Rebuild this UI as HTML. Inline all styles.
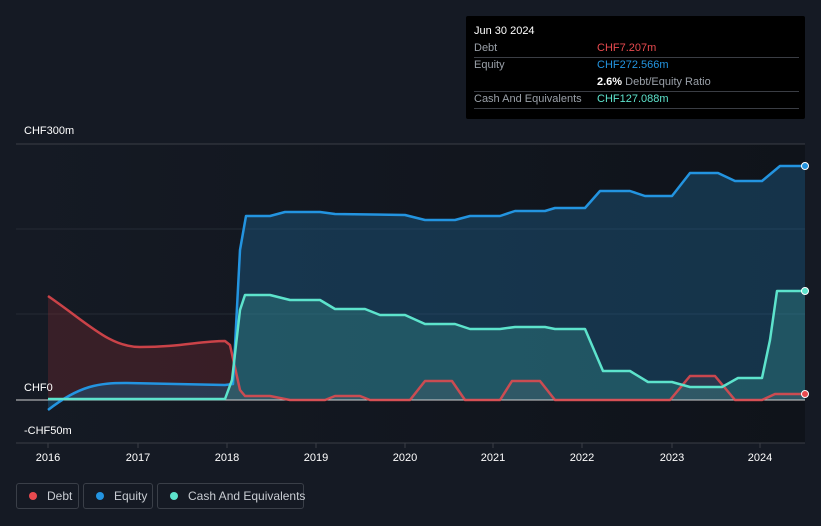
<!DOCTYPE html>
<html><head><meta charset="utf-8"><style>
body{margin:0;width:821px;height:526px;background:#151a24;font-family:"Liberation Sans",sans-serif;overflow:hidden;position:relative}
.tip{position:absolute;left:466px;top:16px;width:339px;height:103px;background:#000;border-radius:2px;font-size:11px}
.tip .r{position:absolute;left:8px;right:6px;border-bottom:1px solid #3a3d44;height:17px}
.lbl{position:absolute;color:#fff;font-size:11px}
.leg{position:absolute;top:483px;height:26px;border:1px solid #3a3f48;border-radius:3px;color:#c8ccd2;font-size:12px;box-sizing:border-box;line-height:24px;white-space:nowrap}
.leg i{display:inline-block;width:8px;height:8px;border-radius:50%;margin:0 10px 0 12px;vertical-align:0}
</style></head><body>
<svg width="821" height="526" style="position:absolute;left:0;top:0">
<defs><linearGradient id="bg" x1="0" x2="1"><stop offset="0" stop-color="#151a24"/><stop offset="1" stop-color="#0f131a"/></linearGradient></defs>
<rect x="16" y="144" width="789" height="299" fill="url(#bg)"/>
<line x1="16" y1="144" x2="805" y2="144" stroke="#3a3e46"/>
<line x1="16" y1="229" x2="805" y2="229" stroke="#252b35"/>
<line x1="16" y1="314" x2="805" y2="314" stroke="#252b35"/>
<line x1="16" y1="443" x2="805" y2="443" stroke="#3a3e46"/>
<path d="M48,296 C90,325 110,347 140,347 C180,347 200,341 225,341 L230,345 L240,390 L245,396 L270,396 L290,400 L325,400 L335,396 L360,396 L370,400 L410,400 L425,381 L452,381 L465,400 L500,400 L512,381 L540,381 L555,400 L670,400 L690,376 L715,376 L735,400 L762,400 L775,394 L805,394 L805,400 L48,400Z" fill="#7a2a30" fill-opacity="0.35"/>
<path d="M48,410 C80,385 100,383 125,383 L225,385 L233,384 L240,250 L246,216 L270,216 L285,212 L320,212 L335,214 L405,215 L425,220 L455,220 L470,216 L500,216 L515,211 L545,211 L555,208 L585,208 L600,191 L630,191 L645,196 L672,196 L690,173 L718,173 L735,181 L762,181 L780,166 L805,166 L805,400 L48,400Z" fill="#1d5a86" fill-opacity="0.45"/>
<path d="M48,399 L225,399 L232,380 L240,310 L245,295 L270,295 L290,300 L320,300 L335,309 L365,309 L380,315 L405,315 L425,324 L455,324 L470,329 L500,329 L515,327 L545,327 L555,329 L585,329 L603,371 L630,371 L648,382 L672,382 L690,387 L722,387 L738,378 L762,378 L770,340 L777,291 L805,291 L805,400 L48,400Z" fill="#3aa39a" fill-opacity="0.3"/>
<line x1="16" y1="400" x2="805" y2="400" stroke="#d0d0d0" stroke-width="1"/>
<path d="M48,296 C90,325 110,347 140,347 C180,347 200,341 225,341 L230,345 L240,390 L245,396 L270,396 L290,400 L325,400 L335,396 L360,396 L370,400 L410,400 L425,381 L452,381 L465,400 L500,400 L512,381 L540,381 L555,400 L670,400 L690,376 L715,376 L735,400 L762,400 L775,394 L805,394" fill="none" stroke="#e84a4f" stroke-width="2.5" stroke-linejoin="round" opacity="0.85"/>
<path d="M48,410 C80,385 100,383 125,383 L225,385 L233,384 L240,250 L246,216 L270,216 L285,212 L320,212 L335,214 L405,215 L425,220 L455,220 L470,216 L500,216 L515,211 L545,211 L555,208 L585,208 L600,191 L630,191 L645,196 L672,196 L690,173 L718,173 L735,181 L762,181 L780,166 L805,166" fill="none" stroke="#2394e0" stroke-width="2.5" stroke-linejoin="round"/>
<path d="M48,399 L225,399 L232,380 L240,310 L245,295 L270,295 L290,300 L320,300 L335,309 L365,309 L380,315 L405,315 L425,324 L455,324 L470,329 L500,329 L515,327 L545,327 L555,329 L585,329 L603,371 L630,371 L648,382 L672,382 L690,387 L722,387 L738,378 L762,378 L770,340 L777,291 L805,291" fill="none" stroke="#5de3cc" stroke-width="2.5" stroke-linejoin="round"/>
<circle cx="805" cy="166" r="3.5" fill="#2394e0" stroke="#fff" stroke-width="1"/>
<circle cx="805" cy="291" r="3.5" fill="#5de3cc" stroke="#fff" stroke-width="1"/>
<circle cx="805" cy="394" r="3.5" fill="#e84a4f" stroke="#fff" stroke-width="1"/>
<g stroke="#3a3e46"><line x1="48" y1="443" x2="48" y2="448"/><line x1="138" y1="443" x2="138" y2="448"/><line x1="227" y1="443" x2="227" y2="448"/><line x1="316" y1="443" x2="316" y2="448"/><line x1="405" y1="443" x2="405" y2="448"/><line x1="493" y1="443" x2="493" y2="448"/><line x1="582" y1="443" x2="582" y2="448"/><line x1="672" y1="443" x2="672" y2="448"/><line x1="760" y1="443" x2="760" y2="448"/></g>
<g fill="#fff" font-size="11" font-family="Liberation Sans" text-anchor="middle"><text x="48" y="461">2016</text><text x="138" y="461">2017</text><text x="227" y="461">2018</text><text x="316" y="461">2019</text><text x="405" y="461">2020</text><text x="493" y="461">2021</text><text x="582" y="461">2022</text><text x="672" y="461">2023</text><text x="760" y="461">2024</text></g>
</svg>
<div class="lbl" style="left:24px;top:125px">CHF300m</div>
<div class="lbl" style="left:24px;top:382px">CHF0</div>
<div class="lbl" style="left:24px;top:425px">-CHF50m</div>
<div class="tip">
<div style="position:absolute;left:8px;top:9px;color:#fff">Jun 30 2024</div>
<div class="r" style="top:24px"><span style="position:absolute;left:0;top:2px;color:#9aa0a8">Debt</span><span style="position:absolute;left:123px;top:2px;color:#e84a4f">CHF7.207m</span></div>
<div class="r" style="top:41px;border:0"><span style="position:absolute;left:0;top:2px;color:#9aa0a8">Equity</span><span style="position:absolute;left:123px;top:2px;color:#2394e0">CHF272.566m</span></div>
<div class="r" style="top:58px"><span style="position:absolute;left:123px;top:2px;color:#9aa0a8"><b style="color:#fff">2.6%</b> Debt/Equity Ratio</span></div>
<div class="r" style="top:75px"><span style="position:absolute;left:0;top:2px;color:#9aa0a8">Cash And Equivalents</span><span style="position:absolute;left:123px;top:2px;color:#5de3cc">CHF127.088m</span></div>
</div>
<div class="leg" style="left:16px;width:63px"><i style="background:#e84a4f"></i>Debt</div>
<div class="leg" style="left:83px;width:70px"><i style="background:#2394e0"></i>Equity</div>
<div class="leg" style="left:157px;width:147px"><i style="background:#5de3cc"></i>Cash And Equivalents</div>
</body></html>
